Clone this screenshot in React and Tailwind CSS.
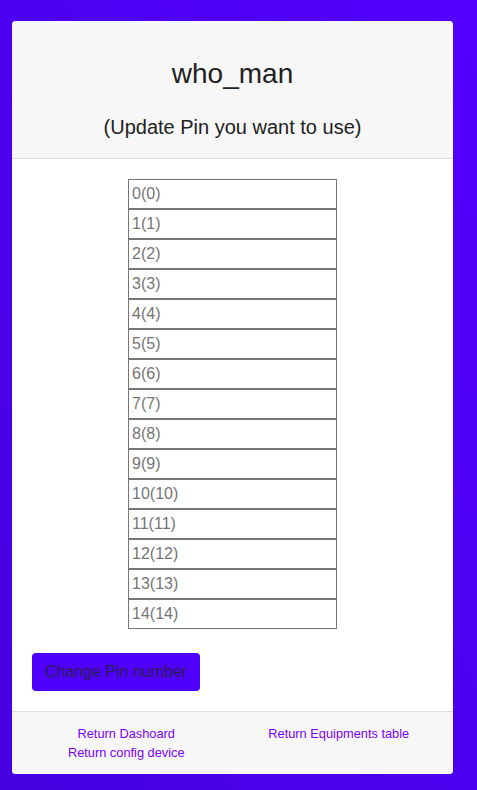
export default function App() {
  const pins = Array.from({ length: 15 }, (_, i) => i);
  return (
    <div className="w-[477px] h-[790px] overflow-hidden bg-gradient-to-tr from-[#4600e0] to-[#5300ff] pt-[21px] pl-[12px]" style={{ fontFamily: '"Liberation Sans", Arial, sans-serif' }}>
      <div className="w-[441px] bg-white rounded-[4px] overflow-hidden">
        <div className="h-[138px] bg-[#f7f7f7] border-b border-[#dddddd] flex flex-col items-center">
          <div className="text-[28px] leading-[32px] text-[#222222] mt-[37px]">who_man</div>
          <div className="text-[20px] leading-[24px] text-[#222222] mt-[25px]">(Update Pin you want to use)</div>
        </div>
        <div className="px-[20px] pt-[20px] pb-[20px]">
          <div className="flex flex-col items-center">
            {pins.map((p) => (
              <input
                key={p}
                type="text"
                placeholder={`${p}(${p})`}
                className="block w-[209px] h-[30px] border border-[#767676] px-[3px] text-[16px] text-[#222] placeholder:text-[#757575] outline-none"
                style={{ fontFamily: '"Liberation Sans", Arial, sans-serif' }}
              />
            ))}
          </div>
          <button className="mt-[24px] h-[38px] w-[168px] rounded-[4px] bg-[#5000ff] text-[16px] text-[#2b1f4d] text-center">
            Change Pin number
          </button>
        </div>
        <div className="border-t border-[#dddddd] bg-[#f7f7f7] h-[63px] px-[8px] pt-[12px]">
          <div className="grid grid-cols-2 text-center text-[12.8px] leading-[19px] text-[#7a00ff]">
            <a>Return Dashoard</a>
            <a>Return Equipments table</a>
            <a>Return config device</a>
          </div>
        </div>
      </div>
    </div>
  );
}
